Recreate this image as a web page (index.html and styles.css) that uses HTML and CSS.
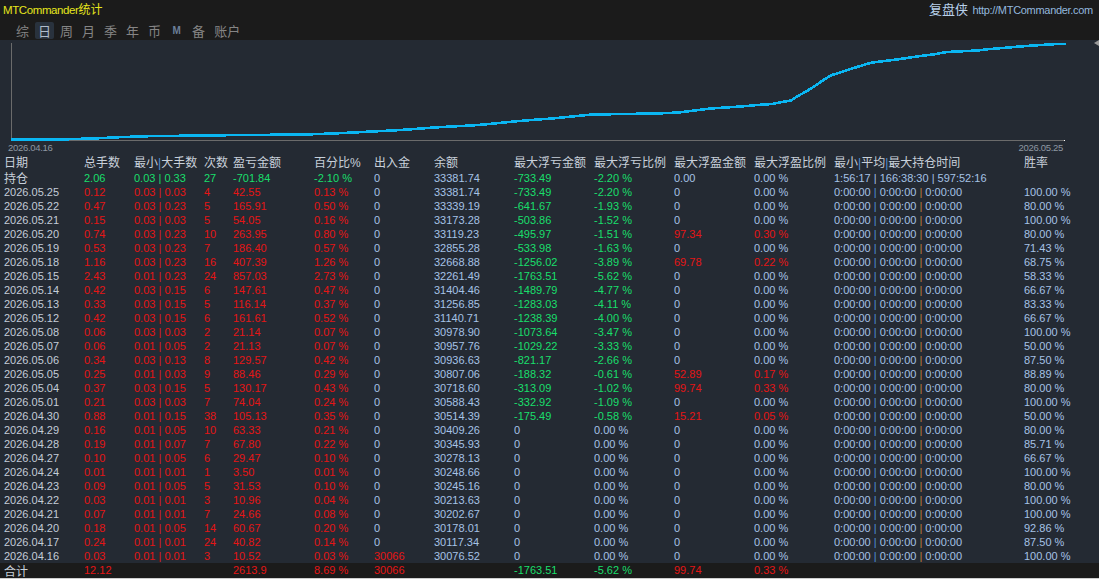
FILE: index.html
```html
<!DOCTYPE html>
<html lang="zh-CN">
<head>
<meta charset="utf-8">
<title>MTCommander统计</title>
<link rel="stylesheet" href="styles.css">
</head>
<body>
<header class="topbar">
  <div class="title-row">
    <div class="brand"><span class="brand-en">MTCommander</span><span class="brand-cn">统计</span></div>
    <div class="site"><span class="site-cn">复盘侠</span> <span class="site-url">http://MTCommander.com</span></div>
  </div>
  <nav class="tabs">
    <span class="tab">综</span>
    <span class="tab on">日</span>
    <span class="tab">周</span>
    <span class="tab">月</span>
    <span class="tab">季</span>
    <span class="tab">年</span>
    <span class="tab">币</span>
    <span class="tab tab-m">M</span>
    <span class="tab">备</span>
    <span class="tab">账户</span>
  </nav>
</header>

<section class="chart">
  <svg class="chart-svg" width="1099" height="101" viewBox="0 0 1099 101">
    <line x1="11.5" y1="3" x2="11.5" y2="101" stroke="#6b6b6b" stroke-width="1"/>
    <line x1="11" y1="100.5" x2="1065" y2="100.5" stroke="#6b6b6b" stroke-width="1"/>
    <rect x="1064" y="100" width="1" height="1" fill="#ffffff"/>
    <polygon points="1099,0 1094,3 1099,6" fill="#9a9a9a"/>
    <polyline class="curve" fill="none" stroke="#0ab6f2" stroke-width="2.6" stroke-linejoin="round"
      points="11,99.8 70,99.2 99,98.2 119,97.2 148,96.2 227,95.2 304,94.5 333,93.5 353,92.5 372,91.5 392,90.5 408,89.5 421,88.5 434,87.5 451,86.5 471,85.5 484,84.5 494,83.5 504,82.5 514,81.5 525,80.5 538,79.5 552,78.5 562,77.5 572,76.5 582,75.5 592,74.5 656,73.5 679,72.5 687,71.5 694,70.5 703,69.5 711,68.5 733,67 747,66 757,65 772,64 782,62 791,60.5 797,56.5 807,51 817,44.5 825,39 832,35 843,31.5 857,27 868,23.5 873,22.5 897,19.5 917,16.5 933,14.5 947,12 967,11 977,10.5 990,9 1003,8 1020,6.5 1033,5.5 1057,4 1066,4"/>
  </svg>
  <div class="axis-labels"><span>2026.04.16</span><span>2026.05.25</span></div>
</section>

<table class="stats">
  <colgroup>
    <col class="c84"><col class="c50"><col class="c70"><col class="c29"><col class="c81"><col class="c60"><col class="c60"><col class="c80"><col class="c80"><col class="c80"><col class="c80"><col class="c80"><col class="c190"><col>
  </colgroup>
  <thead>
    <tr><th>日期</th><th>总手数</th><th>最小<i class="hb">|</i>大手数</th><th>次数</th><th>盈亏金额</th><th>百分比%</th><th>出入金</th><th>余额</th><th>最大浮亏金额</th><th>最大浮亏比例</th><th>最大浮盈金额</th><th>最大浮盈比例</th><th>最小<i class="hb">|</i>平均<i class="hb">|</i>最大持仓时间</th><th>胜率</th></tr>
  </thead>
  <tbody>
    <tr class="hold"><td class="cn">持仓</td><td class="g">2.06</td><td class="g">0.03 | 0.33</td><td class="g">27</td><td class="g">-701.84</td><td class="g">-2.10 %</td><td>0</td><td>33381.74</td><td class="g">-733.49</td><td class="g">-2.20 %</td><td>0.00</td><td>0.00 %</td><td>1:56:17 | 166:38:30 | 597:52:16</td><td></td></tr>
    <tr class="day"><td>2026.05.25</td><td>0.12</td><td>0.03 | 0.03</td><td>4</td><td>42.55</td><td>0.13 %</td><td>0</td><td>33381.74</td><td class="g">-733.49</td><td class="g">-2.20 %</td><td>0</td><td>0.00 %</td><td>0:00:00 <i class="p1">|</i> 0:00:00 <i class="p2">|</i> 0:00:00</td><td>100.00 %</td></tr>
    <tr class="day"><td>2026.05.22</td><td>0.47</td><td>0.03 | 0.23</td><td>5</td><td>165.91</td><td>0.50 %</td><td>0</td><td>33339.19</td><td class="g">-641.67</td><td class="g">-1.93 %</td><td>0</td><td>0.00 %</td><td>0:00:00 <i class="p1">|</i> 0:00:00 <i class="p2">|</i> 0:00:00</td><td>80.00 %</td></tr>
    <tr class="day"><td>2026.05.21</td><td>0.15</td><td>0.03 | 0.03</td><td>5</td><td>54.05</td><td>0.16 %</td><td>0</td><td>33173.28</td><td class="g">-503.86</td><td class="g">-1.52 %</td><td>0</td><td>0.00 %</td><td>0:00:00 <i class="p1">|</i> 0:00:00 <i class="p2">|</i> 0:00:00</td><td>100.00 %</td></tr>
    <tr class="day"><td>2026.05.20</td><td>0.74</td><td>0.03 | 0.23</td><td>10</td><td>263.95</td><td>0.80 %</td><td>0</td><td>33119.23</td><td class="g">-495.97</td><td class="g">-1.51 %</td><td class="r">97.34</td><td class="r">0.30 %</td><td>0:00:00 <i class="p1">|</i> 0:00:00 <i class="p2">|</i> 0:00:00</td><td>80.00 %</td></tr>
    <tr class="day"><td>2026.05.19</td><td>0.53</td><td>0.03 | 0.23</td><td>7</td><td>186.40</td><td>0.57 %</td><td>0</td><td>32855.28</td><td class="g">-533.98</td><td class="g">-1.63 %</td><td>0</td><td>0.00 %</td><td>0:00:00 <i class="p1">|</i> 0:00:00 <i class="p2">|</i> 0:00:00</td><td>71.43 %</td></tr>
    <tr class="day"><td>2026.05.18</td><td>1.16</td><td>0.03 | 0.23</td><td>16</td><td>407.39</td><td>1.26 %</td><td>0</td><td>32668.88</td><td class="g">-1256.02</td><td class="g">-3.89 %</td><td class="r">69.78</td><td class="r">0.22 %</td><td>0:00:00 <i class="p1">|</i> 0:00:00 <i class="p2">|</i> 0:00:00</td><td>68.75 %</td></tr>
    <tr class="day"><td>2026.05.15</td><td>2.43</td><td>0.01 | 0.23</td><td>24</td><td>857.03</td><td>2.73 %</td><td>0</td><td>32261.49</td><td class="g">-1763.51</td><td class="g">-5.62 %</td><td>0</td><td>0.00 %</td><td>0:00:00 <i class="p1">|</i> 0:00:00 <i class="p2">|</i> 0:00:00</td><td>58.33 %</td></tr>
    <tr class="day"><td>2026.05.14</td><td>0.42</td><td>0.03 | 0.15</td><td>6</td><td>147.61</td><td>0.47 %</td><td>0</td><td>31404.46</td><td class="g">-1489.79</td><td class="g">-4.77 %</td><td>0</td><td>0.00 %</td><td>0:00:00 <i class="p1">|</i> 0:00:00 <i class="p2">|</i> 0:00:00</td><td>66.67 %</td></tr>
    <tr class="day"><td>2026.05.13</td><td>0.33</td><td>0.03 | 0.15</td><td>5</td><td>116.14</td><td>0.37 %</td><td>0</td><td>31256.85</td><td class="g">-1283.03</td><td class="g">-4.11 %</td><td>0</td><td>0.00 %</td><td>0:00:00 <i class="p1">|</i> 0:00:00 <i class="p2">|</i> 0:00:00</td><td>83.33 %</td></tr>
    <tr class="day"><td>2026.05.12</td><td>0.42</td><td>0.03 | 0.15</td><td>6</td><td>161.61</td><td>0.52 %</td><td>0</td><td>31140.71</td><td class="g">-1238.39</td><td class="g">-4.00 %</td><td>0</td><td>0.00 %</td><td>0:00:00 <i class="p1">|</i> 0:00:00 <i class="p2">|</i> 0:00:00</td><td>66.67 %</td></tr>
    <tr class="day"><td>2026.05.08</td><td>0.06</td><td>0.03 | 0.03</td><td>2</td><td>21.14</td><td>0.07 %</td><td>0</td><td>30978.90</td><td class="g">-1073.64</td><td class="g">-3.47 %</td><td>0</td><td>0.00 %</td><td>0:00:00 <i class="p1">|</i> 0:00:00 <i class="p2">|</i> 0:00:00</td><td>100.00 %</td></tr>
    <tr class="day"><td>2026.05.07</td><td>0.06</td><td>0.01 | 0.05</td><td>2</td><td>21.13</td><td>0.07 %</td><td>0</td><td>30957.76</td><td class="g">-1029.22</td><td class="g">-3.33 %</td><td>0</td><td>0.00 %</td><td>0:00:00 <i class="p1">|</i> 0:00:00 <i class="p2">|</i> 0:00:00</td><td>50.00 %</td></tr>
    <tr class="day"><td>2026.05.06</td><td>0.34</td><td>0.03 | 0.13</td><td>8</td><td>129.57</td><td>0.42 %</td><td>0</td><td>30936.63</td><td class="g">-821.17</td><td class="g">-2.66 %</td><td>0</td><td>0.00 %</td><td>0:00:00 <i class="p1">|</i> 0:00:00 <i class="p2">|</i> 0:00:00</td><td>87.50 %</td></tr>
    <tr class="day"><td>2026.05.05</td><td>0.25</td><td>0.01 | 0.03</td><td>9</td><td>88.46</td><td>0.29 %</td><td>0</td><td>30807.06</td><td class="g">-188.32</td><td class="g">-0.61 %</td><td class="r">52.89</td><td class="r">0.17 %</td><td>0:00:00 <i class="p1">|</i> 0:00:00 <i class="p2">|</i> 0:00:00</td><td>88.89 %</td></tr>
    <tr class="day"><td>2026.05.04</td><td>0.37</td><td>0.03 | 0.15</td><td>5</td><td>130.17</td><td>0.43 %</td><td>0</td><td>30718.60</td><td class="g">-313.09</td><td class="g">-1.02 %</td><td class="r">99.74</td><td class="r">0.33 %</td><td>0:00:00 <i class="p1">|</i> 0:00:00 <i class="p2">|</i> 0:00:00</td><td>80.00 %</td></tr>
    <tr class="day"><td>2026.05.01</td><td>0.21</td><td>0.03 | 0.03</td><td>7</td><td>74.04</td><td>0.24 %</td><td>0</td><td>30588.43</td><td class="g">-332.92</td><td class="g">-1.09 %</td><td>0</td><td>0.00 %</td><td>0:00:00 <i class="p1">|</i> 0:00:00 <i class="p2">|</i> 0:00:00</td><td>100.00 %</td></tr>
    <tr class="day"><td>2026.04.30</td><td>0.88</td><td>0.01 | 0.15</td><td>38</td><td>105.13</td><td>0.35 %</td><td>0</td><td>30514.39</td><td class="g">-175.49</td><td class="g">-0.58 %</td><td class="r">15.21</td><td class="r">0.05 %</td><td>0:00:00 <i class="p1">|</i> 0:00:00 <i class="p2">|</i> 0:00:00</td><td>50.00 %</td></tr>
    <tr class="day"><td>2026.04.29</td><td>0.16</td><td>0.01 | 0.05</td><td>10</td><td>63.33</td><td>0.21 %</td><td>0</td><td>30409.26</td><td>0</td><td>0.00 %</td><td>0</td><td>0.00 %</td><td>0:00:00 <i class="p1">|</i> 0:00:00 <i class="p2">|</i> 0:00:00</td><td>80.00 %</td></tr>
    <tr class="day"><td>2026.04.28</td><td>0.19</td><td>0.01 | 0.07</td><td>7</td><td>67.80</td><td>0.22 %</td><td>0</td><td>30345.93</td><td>0</td><td>0.00 %</td><td>0</td><td>0.00 %</td><td>0:00:00 <i class="p1">|</i> 0:00:00 <i class="p2">|</i> 0:00:00</td><td>85.71 %</td></tr>
    <tr class="day"><td>2026.04.27</td><td>0.10</td><td>0.01 | 0.05</td><td>6</td><td>29.47</td><td>0.10 %</td><td>0</td><td>30278.13</td><td>0</td><td>0.00 %</td><td>0</td><td>0.00 %</td><td>0:00:00 <i class="p1">|</i> 0:00:00 <i class="p2">|</i> 0:00:00</td><td>66.67 %</td></tr>
    <tr class="day"><td>2026.04.24</td><td>0.01</td><td>0.01 | 0.01</td><td>1</td><td>3.50</td><td>0.01 %</td><td>0</td><td>30248.66</td><td>0</td><td>0.00 %</td><td>0</td><td>0.00 %</td><td>0:00:00 <i class="p1">|</i> 0:00:00 <i class="p2">|</i> 0:00:00</td><td>100.00 %</td></tr>
    <tr class="day"><td>2026.04.23</td><td>0.09</td><td>0.01 | 0.05</td><td>5</td><td>31.53</td><td>0.10 %</td><td>0</td><td>30245.16</td><td>0</td><td>0.00 %</td><td>0</td><td>0.00 %</td><td>0:00:00 <i class="p1">|</i> 0:00:00 <i class="p2">|</i> 0:00:00</td><td>80.00 %</td></tr>
    <tr class="day"><td>2026.04.22</td><td>0.03</td><td>0.01 | 0.01</td><td>3</td><td>10.96</td><td>0.04 %</td><td>0</td><td>30213.63</td><td>0</td><td>0.00 %</td><td>0</td><td>0.00 %</td><td>0:00:00 <i class="p1">|</i> 0:00:00 <i class="p2">|</i> 0:00:00</td><td>100.00 %</td></tr>
    <tr class="day"><td>2026.04.21</td><td>0.07</td><td>0.01 | 0.01</td><td>7</td><td>24.66</td><td>0.08 %</td><td>0</td><td>30202.67</td><td>0</td><td>0.00 %</td><td>0</td><td>0.00 %</td><td>0:00:00 <i class="p1">|</i> 0:00:00 <i class="p2">|</i> 0:00:00</td><td>100.00 %</td></tr>
    <tr class="day"><td>2026.04.20</td><td>0.18</td><td>0.01 | 0.05</td><td>14</td><td>60.67</td><td>0.20 %</td><td>0</td><td>30178.01</td><td>0</td><td>0.00 %</td><td>0</td><td>0.00 %</td><td>0:00:00 <i class="p1">|</i> 0:00:00 <i class="p2">|</i> 0:00:00</td><td>92.86 %</td></tr>
    <tr class="day"><td>2026.04.17</td><td>0.24</td><td>0.01 | 0.01</td><td>24</td><td>40.82</td><td>0.14 %</td><td>0</td><td>30117.34</td><td>0</td><td>0.00 %</td><td>0</td><td>0.00 %</td><td>0:00:00 <i class="p1">|</i> 0:00:00 <i class="p2">|</i> 0:00:00</td><td>87.50 %</td></tr>
    <tr class="day"><td>2026.04.16</td><td>0.03</td><td>0.01 | 0.01</td><td>3</td><td>10.52</td><td>0.03 %</td><td class="r">30066</td><td>30076.52</td><td>0</td><td>0.00 %</td><td>0</td><td>0.00 %</td><td>0:00:00 <i class="p1">|</i> 0:00:00 <i class="p2">|</i> 0:00:00</td><td>100.00 %</td></tr>
  </tbody>
  <tfoot>
    <tr class="total"><td class="cn">合计</td><td class="r">12.12</td><td></td><td></td><td class="r">2613.9</td><td class="r">8.69 %</td><td class="r">30066</td><td></td><td class="g">-1763.51</td><td class="g">-5.62 %</td><td class="r">99.74</td><td class="r">0.33 %</td><td></td><td></td></tr>
  </tfoot>
</table>
</body>
</html>
```

FILE: styles.css
```css
* { box-sizing: border-box; }

html, body {
  margin: 0;
  padding: 0;
}

body {
  width: 1099px;
  height: 579px;
  overflow: hidden;
  background: #242a33;
  font-family: "Liberation Sans", Arial, "Noto Sans CJK SC", sans-serif;
}

/* ---------- top bar ---------- */
.topbar {
  background: #1b1b1b;
  height: 40px;
}

.title-row {
  height: 19px;
  display: flex;
  justify-content: space-between;
  align-items: center;
  padding: 0 6px 0 3px;
}

.brand {
  color: #e6e61c;
  line-height: 19px;
  white-space: nowrap;
}

.brand-en {
  font-family: "Liberation Sans", Arial, sans-serif;
  font-size: 11.5px;
  letter-spacing: -0.4px;
}

.brand-cn {
  font-family: "Noto Sans CJK SC", sans-serif;
  font-size: 12px;
}

.site {
  line-height: 19px;
  white-space: nowrap;
}

.site-cn {
  font-family: "Noto Sans CJK SC", sans-serif;
  font-size: 13px;
  color: #b8d0ea;
}

.site-url {
  font-family: "Liberation Sans", Arial, sans-serif;
  font-size: 11px;
  letter-spacing: -0.3px;
  color: #93b8de;
}

.tabs {
  display: flex;
  gap: 3px;
  height: 21px;
  padding-left: 13px;
}

.tab {
  height: 17px;
  margin-top: 3px;
  padding: 0 3px;
  font-family: "Noto Sans CJK SC", sans-serif;
  font-size: 13px;
  line-height: 17px;
  color: #858585;
  border-radius: 2px;
}

.tab.on {
  background: #29323d;
  color: #b0bccb;
}

.tab-m {
  width: 19px;
  text-align: center;
  font-family: "Liberation Sans", Arial, sans-serif;
  font-size: 10px;
  font-weight: bold;
  color: #6b7f98;
}

/* ---------- chart ---------- */
.chart {
  display: flex;
  flex-direction: column;
}

.chart-svg {
  display: block;
}

.curve {
  shape-rendering: crispEdges;
}

.axis-labels {
  height: 15px;
  display: flex;
  justify-content: space-between;
  padding: 0 36px 0 8px;
  font-size: 9.5px;
  line-height: 13px;
  color: #8e97a2;
  letter-spacing: -0.3px;
}

/* ---------- table ---------- */
.stats {
  width: 1099px;
  border-collapse: collapse;
  table-layout: fixed;
}

.c84 { width: 84px; }
.c50 { width: 50px; }
.c70 { width: 70px; }
.c29 { width: 29px; }
.c81 { width: 81px; }
.c60 { width: 60px; }
.c80 { width: 80px; }
.c190 { width: 190px; }

.stats th,
.stats td {
  padding: 0;
  text-align: left;
  white-space: nowrap;
  overflow: hidden;
  font-weight: normal;
}

.stats th:first-child,
.stats td:first-child {
  padding-left: 4px;
}

.stats th {
  height: 15px;
  line-height: 15px;
  font-family: "Liberation Sans", Arial, "Noto Sans CJK SC", sans-serif;
  font-size: 12px;
  color: #c8d0da;
}

.stats td {
  height: 14px;
  line-height: 14px;
  font-size: 11px;
  color: #a6c2e6;
}

.stats td:first-child {
  color: #c3ccd8;
}

.stats td.cn {
  overflow: visible;
  font-family: "Noto Sans CJK SC", sans-serif;
  font-size: 12px;
  color: #c8d0da;
}

.day td:nth-child(n+2):nth-child(-n+6) {
  color: #e51515;
}

.stats td.r { color: #e51515; }
.stats td.g { color: #19df6b; }

.stats i {
  font-style: normal;
}

.hb { color: #4f8fd6; }
.p1 { color: #4f8fd6; }
.p2 { color: #bd7f3c; }

.total td {
  height: 15px;
  line-height: 15px;
  background: #1b1b1b;
}

.total {
  border-bottom: 1px solid #cfcfcf;
}
```
